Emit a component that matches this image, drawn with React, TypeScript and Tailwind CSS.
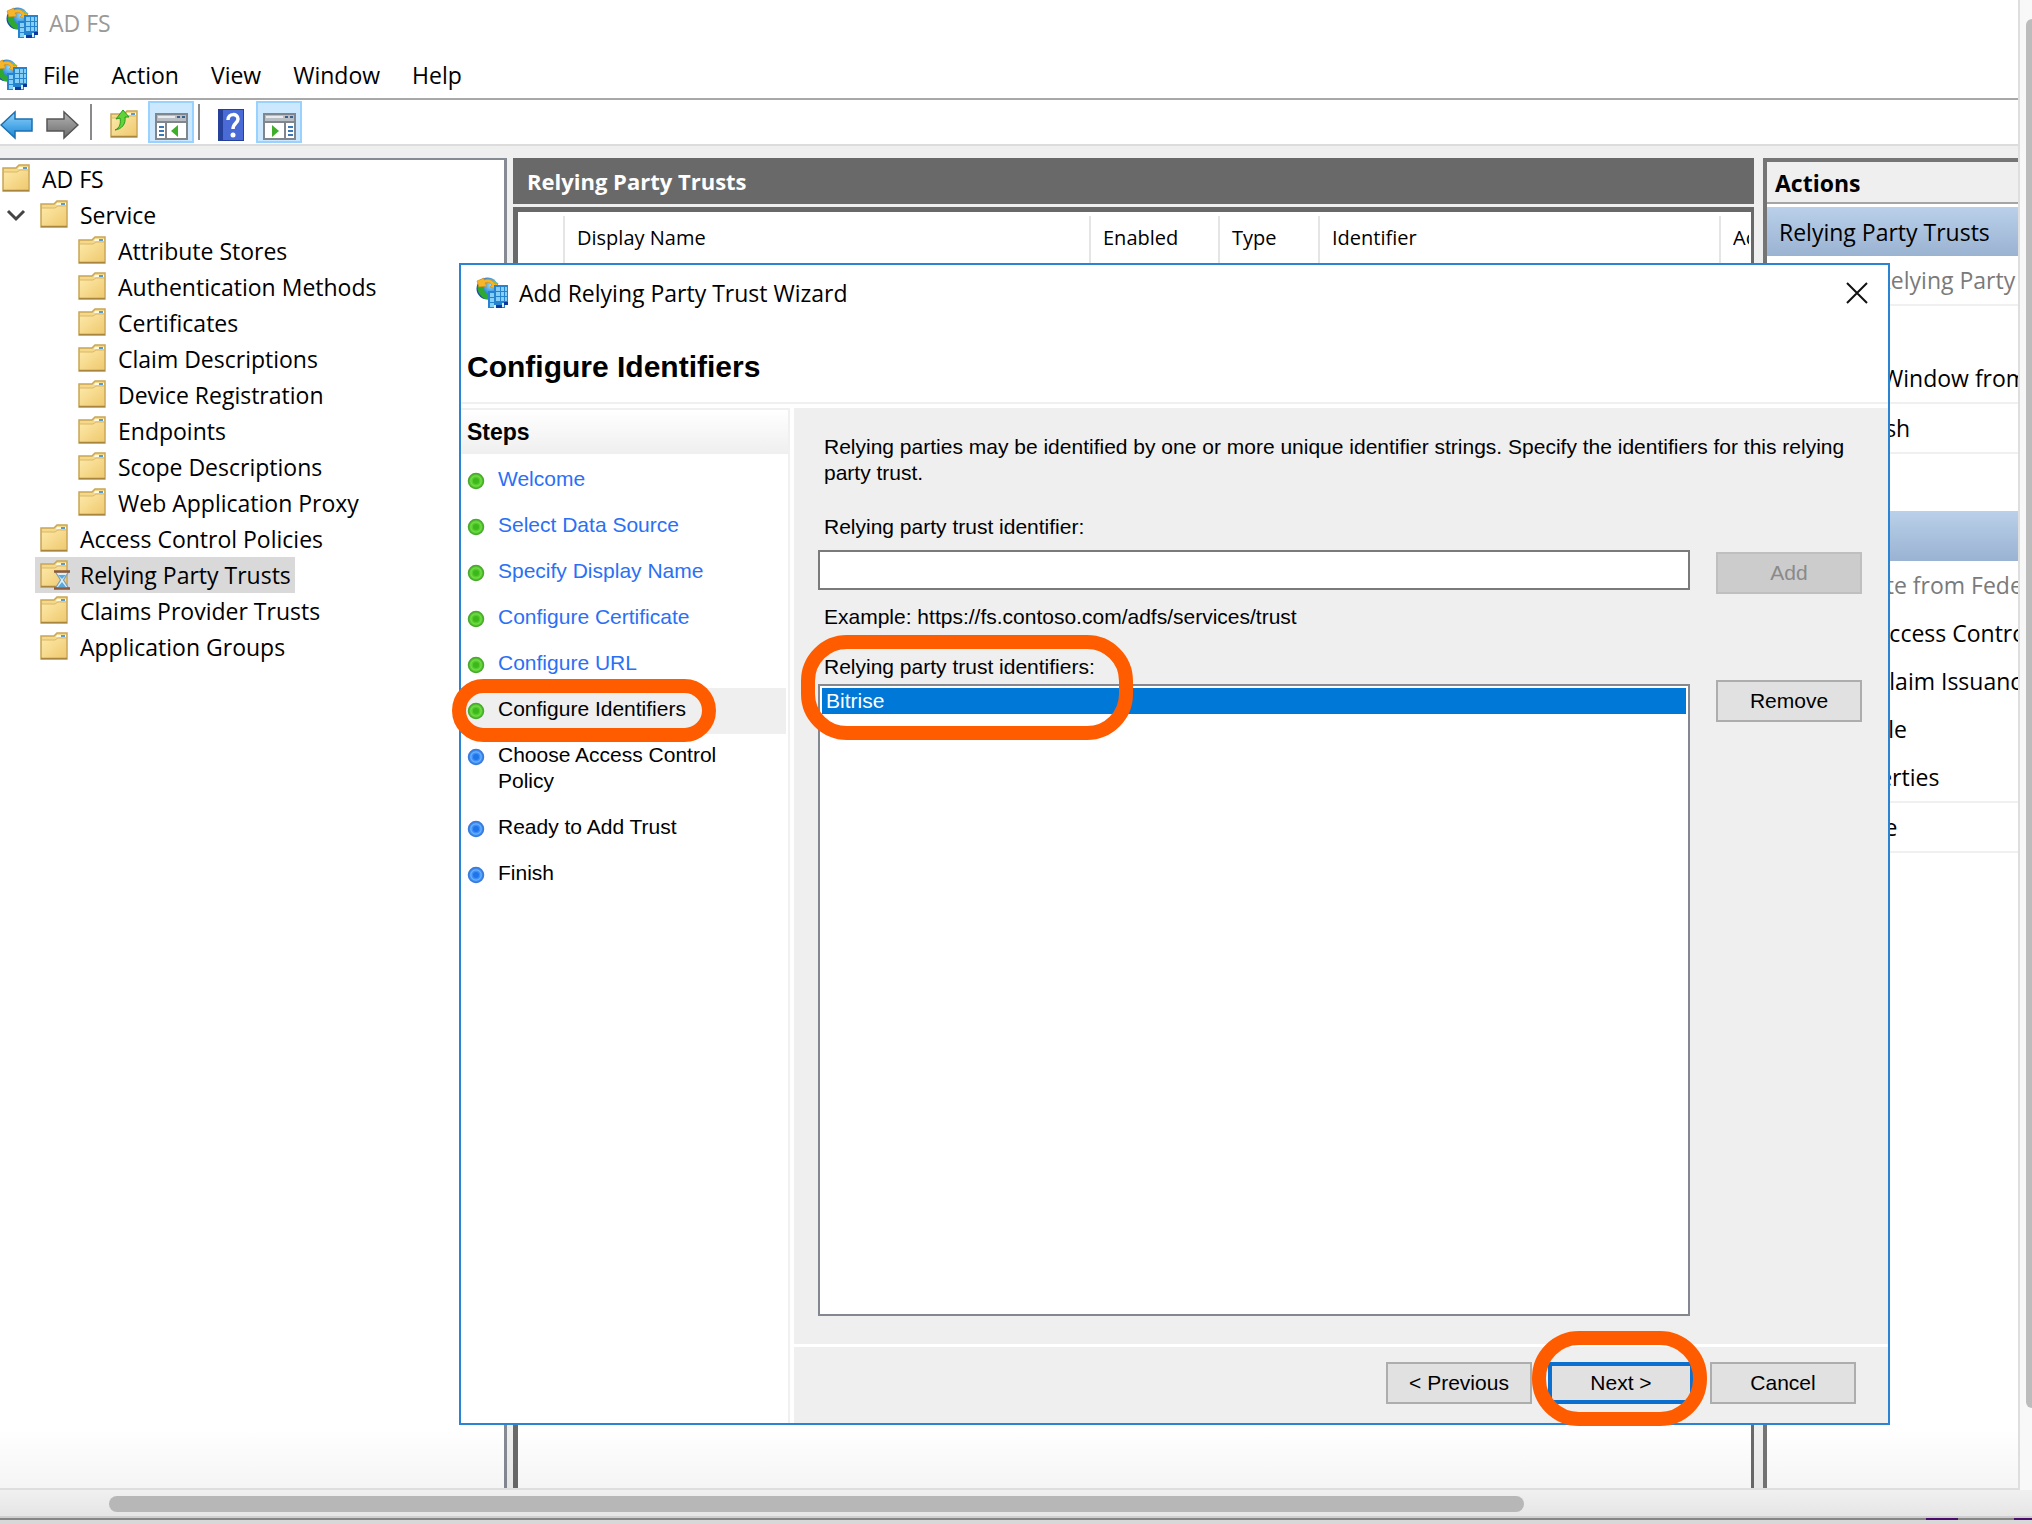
import React from 'react';
import clsx from 'clsx';

interface TreeNode {
  label: string;
  level: 0 | 1 | 2;
  expanded?: boolean;
  selected?: boolean;
}

const treeNodes: TreeNode[] = [
  { label: 'AD FS', level: 0 },
  { label: 'Service', level: 1, expanded: true },
  { label: 'Attribute Stores', level: 2 },
  { label: 'Authentication Methods', level: 2 },
  { label: 'Certificates', level: 2 },
  { label: 'Claim Descriptions', level: 2 },
  { label: 'Device Registration', level: 2 },
  { label: 'Endpoints', level: 2 },
  { label: 'Scope Descriptions', level: 2 },
  { label: 'Web Application Proxy', level: 2 },
  { label: 'Access Control Policies', level: 1 },
  { label: 'Relying Party Trusts', level: 1, selected: true },
  { label: 'Claims Provider Trusts', level: 1 },
  { label: 'Application Groups', level: 1 },
];

type StepState = 'done' | 'current' | 'todo';

const steps: { label: string; state: StepState }[] = [
  { label: 'Welcome', state: 'done' },
  { label: 'Select Data Source', state: 'done' },
  { label: 'Specify Display Name', state: 'done' },
  { label: 'Configure Certificate', state: 'done' },
  { label: 'Configure URL', state: 'done' },
  { label: 'Configure Identifiers', state: 'current' },
  { label: 'Choose Access Control Policy', state: 'todo' },
  { label: 'Ready to Add Trust', state: 'todo' },
  { label: 'Finish', state: 'todo' },
];

interface ActionItem {
  label: string;
  disabled?: boolean;
  line?: boolean;
}

const trustActions: ActionItem[] = [
  { label: 'Add Relying Party Trust...', disabled: true, line: true },
  { label: 'View' },
  { label: 'New Window from Here', line: true },
  { label: 'Refresh', line: true },
  { label: 'Help' },
];

const itemActions: ActionItem[] = [
  { label: 'Update from Federation Metadata...', disabled: true },
  { label: 'Edit Access Control Policy...' },
  { label: 'Edit Claim Issuance Policy...' },
  { label: 'Disable' },
  { label: 'Properties', line: true },
  { label: 'Delete', line: true },
];

const AdfsIcon: React.FC<{ className?: string }> = ({ className }) => (
  <svg className={clsx('h-8 w-8 shrink-0', className)} viewBox="0 0 32 32" aria-hidden="true">
    <defs>
      <radialGradient id="globe" cx="0.65" cy="0.35" r="0.8">
        <stop offset="0" stopColor="#8fe0ff" />
        <stop offset="0.5" stopColor="#2c86dc" />
        <stop offset="1" stopColor="#0b2f9c" />
      </radialGradient>
    </defs>
    <circle cx="11.5" cy="11.5" r="11" fill="url(#globe)" />
    <path d="M2 8 L7 9 L9 15 L14 19 L14 22 L9 22 C4 19 0.500 14 2 8 Z" fill="#2fa832" />
    <path d="M14 3 L20 5 L22 9 L17 10 Z" fill="#7ccf3c" />
    <path d="M1 4 L8 1 L8 3 C12 1 17 3 19 7 L22 6 L20 12 L14 10 L16 8 C14 5 11 5 9 6 L11 9 L3 10 Z" fill="#f6b62c" stroke="#d98c12" strokeWidth="0.7" />
    <path d="M18 8 H32 V27 H29 V31 H12 V14 H18 Z" fill="#2583cf" />
    <path d="M20 10h4v4h-4z M25 10h3v4h-3z M29 10h2v4h-2z M20 15h4v4h-4z M25 15h3v4h-3z M29 15h2v4h-2z M20 20h4v4h-4z M25 20h3v4h-3z M29 20h2v4h-2z M14 16h4v4h-4z M14 21h4v4h-4z M14 26h4v4h-4z" fill="#86d0f8" />
    <path d="M20 28h6v3h-6z M28 25h4v3h-4z" fill="#0a3aa0" />
    <path d="M18 28h2v3h-2z M26 26h2v4h-2z" fill="#d7f1ff" />
  </svg>
);

const FolderShape: React.FC = () => (
  <>
    <path d="M1 4 H14 L17 1 H27 V27 H1 Z" fill="#f5d98b" stroke="#c9a556" strokeWidth="1.500" />
    <path d="M2 8 H15 L18 6 H26 V26 H2 Z" fill="url(#folderFace)" />
    <path d="M2 8 H15 L18 6 H26" fill="none" stroke="#d9b767" />
    <path d="M17 3 H26 V5 H16 Z" fill="#fffbe8" />
    <path d="M21 3 h4 v2 h-4 z" fill="#5a9bd0" />
    <path d="M1 26.500 H27" stroke="#a98640" strokeWidth="1.500" />
    <defs>
      <linearGradient id="folderFace" x1="0" y1="0" x2="1" y2="1">
        <stop offset="0" stopColor="#fde9a9" />
        <stop offset="1" stopColor="#efc96f" />
      </linearGradient>
    </defs>
  </>
);

const FolderIcon: React.FC<{ busy?: boolean }> = ({ busy }) => (
  <svg className="h-[30px] w-[30px] shrink-0" viewBox="0 0 30 30" aria-hidden="true">
    <FolderShape />
    {busy && (
      <g>
        <path d="M15.500 12 H28.500 L23.500 20 L28.500 28 H15.500 L20.500 20 Z" fill="#d9f0fb" stroke="#7f9fb5" strokeWidth="1.200" />
        <path d="M18 15 H26 L22 19 Z M22 22 L26 27 H18 Z" fill="#5aa9dd" />
        <path d="M14 11.500 H30 M14 28.500 H30" stroke="#8f5a3a" strokeWidth="2.500" />
      </g>
    )}
  </svg>
);

const FolderUpIcon: React.FC = () => (
  <svg className="h-[30px] w-[30px]" viewBox="0 0 30 30" aria-hidden="true">
    <FolderShape />
    <path d="M5 20 C10 18 11 13 10 8 L6 9 L13 0 L19 7 L15 7 C16 14 12 19 5 20 Z" fill="#5fd43a" stroke="#2d9a1c" />
  </svg>
);

const ArrowIcon: React.FC<{ forward?: boolean }> = ({ forward }) => (
  <svg className="h-[30px] w-[33px]" viewBox="0 0 33 30" aria-hidden="true">
    <defs>
      <linearGradient id="arrowBlue" x1="0" y1="0" x2="0" y2="1">
        <stop offset="0" stopColor="#8ed4fb" />
        <stop offset="1" stopColor="#1a86d8" />
      </linearGradient>
      <linearGradient id="arrowGray" x1="0" y1="0" x2="0" y2="1">
        <stop offset="0" stopColor="#b5b5b5" />
        <stop offset="1" stopColor="#6c6c6c" />
      </linearGradient>
    </defs>
    {forward ? (
      <path d="M32 15 L18 2 V9 H1 V21 H18 V28 Z" fill="url(#arrowGray)" stroke="#555" strokeWidth="1.500" />
    ) : (
      <path d="M1 15 L15 2 V9 H32 V21 H15 V28 Z" fill="url(#arrowBlue)" stroke="#1d6fb0" strokeWidth="1.500" />
    )}
  </svg>
);

const PaneIcon: React.FC<{ side: 'left' | 'right' }> = ({ side }) => (
  <svg className="h-[27px] w-[33px]" viewBox="0 0 33 27" aria-hidden="true">
    <rect x="1" y="1" width="31" height="25" fill="#fff" stroke="#80868c" strokeWidth="2" />
    <path d="M2 2 H31 V8 H2 Z" fill="#b9bec4" />
    <path d="M3 4 H20" stroke="#e8ebee" strokeWidth="2" />
    <path d="M22 3h3v2h-3z M27 3h3v2h-3z" fill="#3a5f8c" />
    <path d="M1 9 H32" stroke="#80868c" strokeWidth="2" />
    {side === 'left' ? (
      <>
        <path d="M11 9 V26" stroke="#80868c" strokeWidth="2" />
        <path d="M4 14h5 M4 18h5 M4 22h5" stroke="#3a78b8" strokeWidth="2" />
        <path d="M23 12 V24 L16 18 Z" fill="#3fae2a" />
      </>
    ) : (
      <>
        <path d="M22 9 V26" stroke="#80868c" strokeWidth="2" />
        <path d="M25 14h5 M25 18h5 M25 22h5" stroke="#3a78b8" strokeWidth="2" />
        <path d="M9 12 V24 L16 18 Z" fill="#3fae2a" />
      </>
    )}
  </svg>
);

const HelpIcon: React.FC = () => (
  <svg className="h-8 w-[26px]" viewBox="0 0 26 32" aria-hidden="true">
    <rect width="26" height="32" fill="#26419c" />
    <rect x="5" y="1" width="20" height="30" fill="#4a6bd6" />
    <path d="M10 11 C10 4 20 4 20 10 C20 14 15 14 15 20" fill="none" stroke="#fff" strokeWidth="3.500" />
    <circle cx="15" cy="26" r="2.500" fill="#fff" />
  </svg>
);

const StepDot: React.FC<{ done: boolean }> = ({ done }) => (
  <svg className="mt-1.5 h-[18px] w-[18px] shrink-0" viewBox="0 0 18 18" aria-hidden="true">
    <circle cx="9" cy="9" r="7.500" fill={done ? '#55cb2c' : '#3d8ff5'} stroke={done ? '#4aa82e' : '#3a7ad8'} strokeWidth="1.500" />
    <circle cx="9" cy="9" r="5.200" fill="none" stroke={done ? '#74dc4c' : '#6cb2ff'} strokeWidth="1.200" />
    <circle cx="9" cy="9" r="3" fill={done ? '#3cb81c' : '#1f74ea'} />
  </svg>
);

const ToolButton: React.FC<{ label: string; pressed?: boolean; children: React.ReactNode }> = ({
  label,
  pressed,
  children,
}) => (
  <button
    aria-label={label}
    className={clsx(
      'flex h-[42px] items-center justify-center',
      pressed ? 'w-[46px] border-2 border-[#99d1ff] bg-[#cce8ff] pt-2' : 'pt-1.5'
    )}
  >
    {children}
  </button>
);

const TreeItem: React.FC<{ node: TreeNode }> = ({ node }) => (
  <li
    className={clsx(
      'flex h-9 items-center',
      node.level === 0 && 'pl-0.5',
      node.level === 1 && 'pl-1',
      node.level === 2 && 'pl-[73px]'
    )}
  >
    {node.level === 1 && (
      <span className="flex w-[31px] shrink-0 pl-0.5">
        {node.expanded && (
          <svg className="h-5 w-5" viewBox="0 0 20 20" aria-hidden="true">
            <path d="M2 6 L10 14 L18 6" fill="none" stroke="#444" strokeWidth="3" />
          </svg>
        )}
      </span>
    )}
    <button
      className={clsx(
        'flex h-9 items-center gap-2.5 whitespace-nowrap',
        node.level > 0 && 'pr-1 pl-[5px]',
        node.selected && 'bg-[#d9d9d9]'
      )}
    >
      <FolderIcon busy={node.selected} />
      {node.label}
    </button>
  </li>
);

const ActionList: React.FC<{ items: ActionItem[] }> = ({ items }) => (
  <ul>
    {items.map((item) => (
      <li
        key={item.label}
        className={clsx('pl-[61px]', item.line ? 'h-[50px] border-b-2 border-[#f0f0f0]' : 'h-12')}
      >
        <button
          disabled={item.disabled}
          className={clsx('h-full whitespace-nowrap', item.disabled && 'text-[#7a7a7a]')}
        >
          {item.label}
        </button>
      </li>
    ))}
  </ul>
);

const WizardButton: React.FC<{ children: React.ReactNode; primary?: boolean; disabled?: boolean }> = ({
  children,
  primary,
  disabled,
}) => (
  <button
    disabled={disabled}
    className={clsx(
      'h-[42px] w-[146px] shrink-0',
      primary && 'border-4 border-[#0a6fcf] bg-[#e1e1e1]',
      disabled && 'border-2 border-[#bfbfbf] bg-[#cccccc] text-[#8a8a8a]',
      !primary && !disabled && 'border-2 border-[#adadad] bg-[#e1e1e1]'
    )}
  >
    {children}
  </button>
);

const Wizard: React.FC = () => (
  <section
    role="dialog"
    aria-labelledby="wizard-title"
    className="absolute top-[263px] right-[142px] left-[459px] border-2 border-[#2b84d3] bg-white font-['Liberation_Sans',Arial,sans-serif] text-[21px] leading-[26px]"
  >
    <div className="flex h-14 items-center pr-5 pl-[15px] font-['Open_Sans','Noto_Sans',sans-serif] text-[23px]">
      <AdfsIcon />
      <span id="wizard-title" className="ml-[11px] flex-1">
        Add Relying Party Trust Wizard
      </span>
      <button aria-label="Close">
        <svg className="h-[22px] w-[22px]" viewBox="0 0 22 22" aria-hidden="true">
          <path d="M1 1 L21 21 M21 1 L1 21" stroke="#111" strokeWidth="2" />
        </svg>
      </button>
    </div>
    <div className="border-b-2 border-[#f0f0f0] pt-[33px] pb-[22px] pl-1.5">
      <h1 className="text-[30px] leading-[26px] font-bold">Configure Identifiers</h1>
    </div>

    <div className="flex pt-1">
      {/* Steps */}
      <nav className="mr-1 w-[329px] shrink-0 border-t-2 border-r-2 border-[#f0f0f0]">
        <h2 className="flex h-11 items-center bg-linear-to-b from-white to-[#efefef] pl-1.5 text-[23px] font-bold">
          Steps
        </h2>
        <ol className="mt-1 mr-0.5">
          {steps.map((step) => (
            <li
              key={step.label}
              className={clsx('flex gap-[13px] pt-2 pr-8 pb-3 pl-1.5', step.state === 'current' && 'bg-[#efefef]')}
            >
              <StepDot done={step.state !== 'todo'} />
              {step.state === 'done' ? (
                <a href="#step" className="text-[#2a70f5]">
                  {step.label}
                </a>
              ) : (
                <span>{step.label}</span>
              )}
            </li>
          ))}
        </ol>
      </nav>

      {/* Identifier form */}
      <div className="min-w-0 flex-1 bg-[#efefef]">
        <div className="pt-[26px] pr-[26px] pb-7 pl-6">
          <p className="px-1.5">
            Relying parties may be identified by one or more unique identifier strings. Specify the
            identifiers for this relying party trust.
          </p>
          <label htmlFor="identifier" className="mt-7 block px-1.5">
            Relying party trust identifier:
          </label>
          <div className="mt-2.5 flex items-start gap-[26px]">
            <input id="identifier" className="h-10 min-w-0 flex-1 border-2 border-[#7a7a7a] bg-white px-2" />
            <div className="pt-0.5">
              <WizardButton disabled>Add</WizardButton>
            </div>
          </div>
          <p className="mt-2.5 px-1.5">Example: https://fs.contoso.com/adfs/services/trust</p>
          <div className="mt-6 flex items-start gap-[26px]">
            <div className="min-w-0 flex-1">
              <h3 id="identifiers-label" className="px-1.5">
                Relying party trust identifiers:
              </h3>
              <ul
                role="listbox"
                aria-labelledby="identifiers-label"
                className="mt-1 h-[632px] border-2 border-[#828790] bg-white p-0.5"
              >
                <li role="option" aria-selected="true" className="bg-[#0078d7] px-1 text-white">
                  Bitrise
                </li>
              </ul>
            </div>
            <div className="pt-[26px]">
              <WizardButton>Remove</WizardButton>
            </div>
          </div>
        </div>
        <div className="flex justify-end border-t-3 border-white pt-[15px] pr-8 pb-[19px]">
          <WizardButton>&lt; Previous</WizardButton>
          <div className="mr-4 ml-4 flex">
            <WizardButton primary>Next &gt;</WizardButton>
          </div>
          <WizardButton>Cancel</WizardButton>
        </div>
      </div>
    </div>
  </section>
);

export default function App() {
  return (
    <div className="relative flex h-screen flex-col overflow-hidden bg-[#d8d8d8] font-['Open_Sans','Noto_Sans',sans-serif] text-[23px] leading-7 text-black">
      <div className="flex min-h-0 flex-1">
        <main className="flex min-w-0 flex-1 flex-col border-r-2 border-b-2 border-[#dedede] bg-white">
          <header>
            <div className="flex h-[46px] items-center gap-[11px] pl-1.5 text-[#999]">
              <AdfsIcon />
              AD FS
            </div>
            <nav className="flex h-[54px] items-center border-b-2 border-[#a8a8a8] pt-1.5">
              <AdfsIcon className="-ml-[5px]" />
              <div className="flex gap-8 pl-4">
                <button>File</button>
                <button>Action</button>
                <button>View</button>
                <button>Window</button>
                <button>Help</button>
              </div>
            </nav>
            <div className="flex h-[46px] items-center border-b-2 border-[#dcdcdc]">
              <ToolButton label="Back">
                <ArrowIcon />
              </ToolButton>
              <span className="w-[13px]" />
              <ToolButton label="Forward">
                <ArrowIcon forward />
              </ToolButton>
              <span className="mx-[11px] h-9 w-0.5 bg-[#8a8a8a]" />
              <span className="w-[7px]" />
              <ToolButton label="Up one level">
                <FolderUpIcon />
              </ToolButton>
              <span className="w-2" />
              <ToolButton label="Show or hide console tree" pressed>
                <PaneIcon side="left" />
              </ToolButton>
              <span className="mr-[18px] ml-1 h-9 w-0.5 bg-[#8a8a8a]" />
              <ToolButton label="Help">
                <HelpIcon />
              </ToolButton>
              <span className="w-3" />
              <ToolButton label="Show or hide action pane" pressed>
                <PaneIcon side="right" />
              </ToolButton>
            </div>
          </header>

          <div className="flex min-h-0 flex-1 bg-[#efefef] pt-3">
            {/* Console tree */}
            <aside className="w-[507px] shrink-0 border-t-2 border-r-3 border-[#868a93] bg-white pt-px">
              <ul>
                {treeNodes.map((node) => (
                  <TreeItem key={node.label} node={node} />
                ))}
              </ul>
            </aside>

            {/* Trust list */}
            <section className="ml-1.5 flex min-w-0 flex-1 flex-col">
              <h2 className="flex h-[46px] items-center bg-[#696969] pl-3.5 text-[22px] font-bold text-white">
                Relying Party Trusts
              </h2>
              <div className="mt-[3px] flex-1 overflow-hidden border-t-5 border-r-3 border-l-5 border-[#696969] bg-white pt-1">
                <table className="w-full table-fixed text-left text-[20px]">
                  <thead>
                    <tr className="h-12 whitespace-nowrap">
                      <th className="w-[46px] border-r-2 border-[#e5e5e5]" aria-label="Icon" />
                      <th className="border-r-2 border-[#e5e5e5] pb-1 pl-3 font-normal">Display Name</th>
                      <th className="w-[129px] border-r-2 border-[#e5e5e5] pb-1 pl-3 font-normal">Enabled</th>
                      <th className="w-[100px] border-r-2 border-[#e5e5e5] pb-1 pl-3 font-normal">Type</th>
                      <th className="w-[401px] border-r-2 border-[#e5e5e5] pb-1 pl-3 font-normal">Identifier</th>
                      <th className="w-[31px] pr-0.5 pb-1 pl-3 font-normal">
                        <div className="overflow-hidden">Ac</div>
                      </th>
                    </tr>
                  </thead>
                </table>
              </div>
            </section>

            {/* Actions */}
            <aside className="ml-[9px] w-[255px] shrink-0 overflow-hidden border-t-4 border-l-4 border-[#757575] bg-white">
              <h2 className="mb-[3px] flex h-[42px] items-center border-b-2 border-[#a5a5a5] bg-[#efefef] pt-0.5 pl-2 font-bold">
                Actions
              </h2>
              <h3 className="flex h-[49px] items-center bg-linear-to-b from-[#bad0ea] to-[#9ab3d2] pl-3 whitespace-nowrap">
                Relying Party Trusts
              </h3>
              <ActionList items={trustActions} />
              <div className="mt-[9px] h-[50px] bg-linear-to-b from-[#bad0ea] to-[#9ab3d2]" />
              <ActionList items={itemActions} />
            </aside>
          </div>
        </main>

        {/* Vertical scroll strip */}
        <div className="flex w-3 shrink-0 justify-end bg-[#f8f8f8] pt-[19px]">
          <div className="h-[1389px] w-1.5 rounded-l-md bg-[#bcbcbc]" />
        </div>
      </div>

      {/* Horizontal scroll strip */}
      <div className="h-[26px] shrink-0 bg-linear-to-b from-[#f0f0f0] to-[#e6e6e6] pt-1.5 pr-[508px] pl-[109px]">
        <div className="h-4 rounded-full bg-[#b7b7b7]" />
      </div>
      <div className="flex h-1 shrink-0 justify-end border-t-2 border-[#cfcfcf] bg-[#868686]">
        <span className="mr-14 w-8 bg-[#4b0a6e]" />
        <span className="w-[18px] bg-[#4b0a6e]" />
      </div>
      <div className="h-1 shrink-0" />

      {/* Fade along the lower edge of the console */}
      <div className="pointer-events-none absolute right-3.5 bottom-9 left-0 h-[60px] bg-linear-to-b from-black/0 to-black/4" />

      <Wizard />

      {/* Callouts */}
      <div className="pointer-events-none absolute top-[679px] left-[452px] h-[63px] w-[264px] rounded-full border-14 border-[#ff5c00]" />
      <div className="pointer-events-none absolute top-[635px] left-[801px] h-[105px] w-[332px] rounded-[46px] border-14 border-[#ff5c00]" />
      <div className="pointer-events-none absolute top-[1331px] right-[325px] h-[95px] w-[175px] rounded-[47px] border-14 border-[#ff5c00]" />
    </div>
  );
}
